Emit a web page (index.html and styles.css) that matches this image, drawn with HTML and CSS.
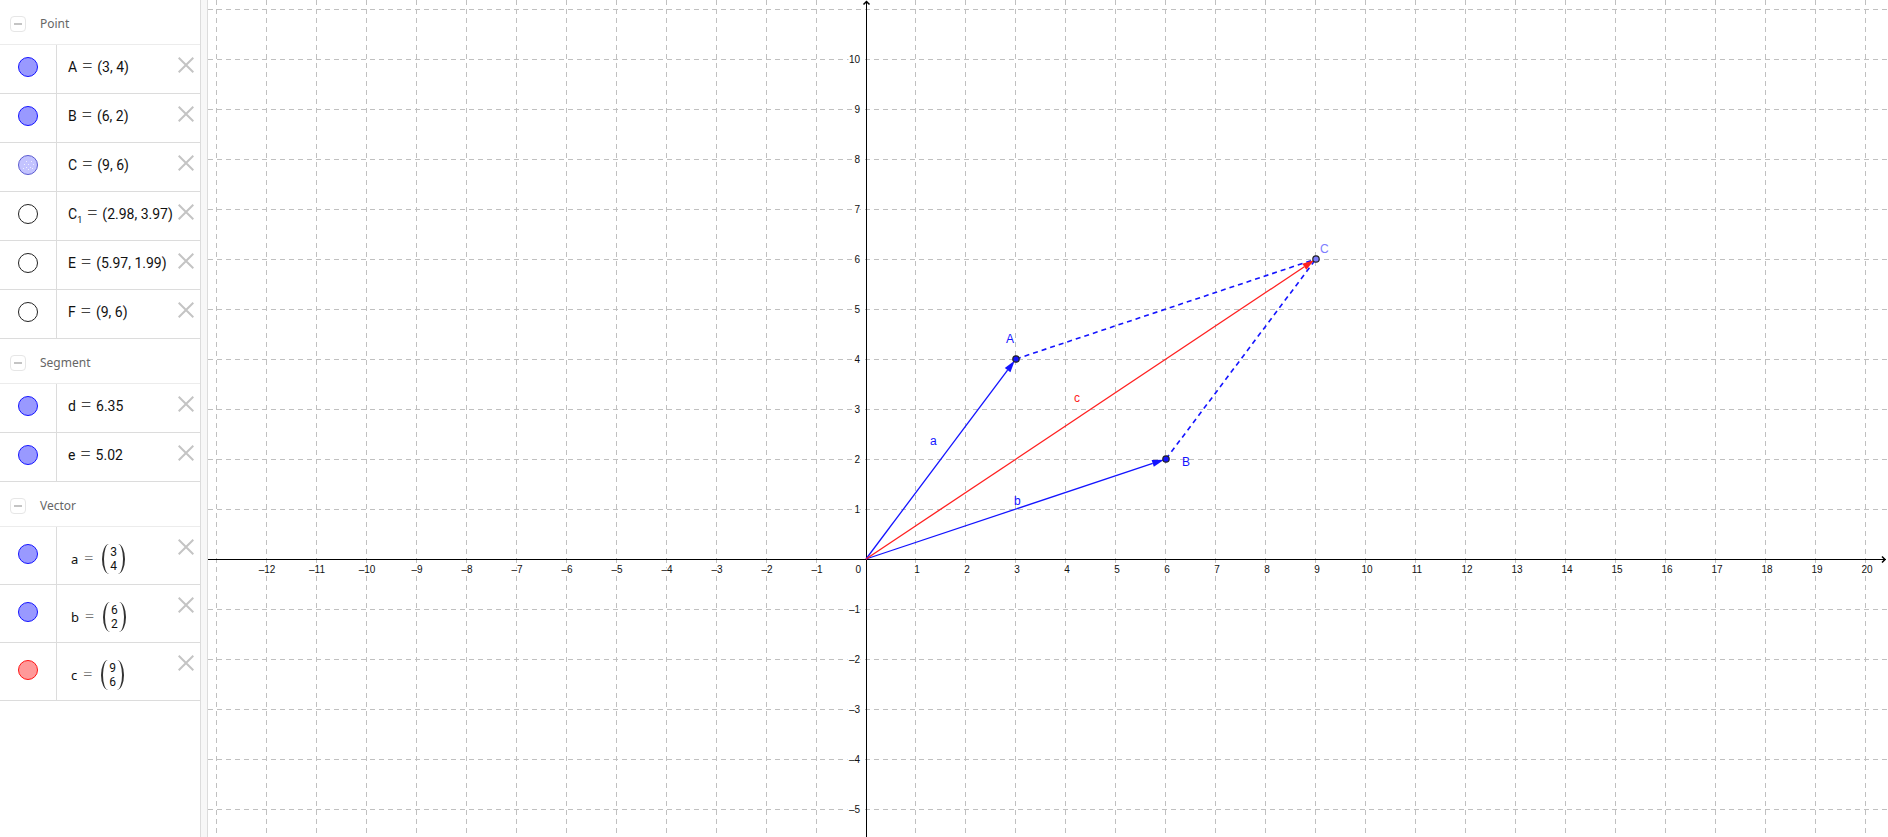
FILE: index.html
```html
<!DOCTYPE html>
<html lang="en">
<head>
<meta charset="utf-8">
<title>Vector addition</title>
<link rel="stylesheet" href="styles.css">
</head>
<body>
<main class="app">
  <aside class="algebra" id="algebra" aria-label="Algebra"></aside>
  <div class="splitter"></div>
  <section class="graphics" aria-label="Graphics">
    <svg class="plot" id="plot"></svg>
  </section>
</main>
<script src="app.js"></script>
</body>
</html>
```
FILE: styles.css
```css
* { box-sizing: border-box; }
body { margin: 0; background: #fff; font-family: "Noto Sans", "Open Sans", sans-serif; }
button { padding: 0; border: 0; background: none; font: inherit; cursor: pointer; }

.app { display: flex; height: 100vh; overflow: hidden; }
.algebra { flex: 0 0 200px; overflow: hidden; }
.splitter { flex: 0 0 8px; background: #f7f7f7; border: solid #dcdcdc; border-width: 0 1px; }
.graphics { flex: 1; min-width: 0; }
.plot { display: block; width: 100%; height: 100%; }

.group-head { display: flex; align-items: center; gap: 14px; height: 45px; padding: 4px 10px 0; border-bottom: 1px solid #ececec; }
.group-title { margin: 0; font-size: 12px; line-height: 16px; font-weight: 400; color: #666; }
.toggle { display: flex; align-items: center; justify-content: center; width: 16px; height: 16px; border: 1px solid #e6e6e6; border-radius: 4px; }
.toggle::before { content: ""; width: 8px; height: 2px; background: #c4c4c4; }

.rows { margin: 0; padding: 0; list-style: none; }
.row { display: flex; height: 49px; border-bottom: 1px solid #dcdcdc; }
.row.tall { height: 58px; }
.marble-cell { flex: 0 0 57px; padding: 12px 0 0 18px; border-right: 1px solid #dcdcdc; }
.tall .marble-cell { padding-top: 17px; }
.marble { display: block; width: 20px; height: 20px; border: 1px solid #222; border-radius: 50%; }
.marble.blue { border-color: #1414ff; background: #9999ff; }
.marble.red { border-color: #ff1414; background: #ff9999; }
.marble.pale { border-color: #5b5bd0; background: #c3c3ff; }
.marble svg { display: block; fill: #eeeeff; }
.expr { flex: 1; display: flex; align-items: baseline; gap: 5px; padding: 10px 0 0 11px; font-family: Roboto, sans-serif; font-size: 14px; line-height: 24px; color: #111; white-space: nowrap; }
.expr sub { font-size: 9px; line-height: 0; vertical-align: -4px; }
.eq { font-family: "Liberation Serif", serif; font-size: 18px; line-height: 20px; color: #444; }
.tall .expr { align-items: center; padding: 7px 0 0 14px; gap: 6px; font-family: "Noto Sans", sans-serif; font-size: 13px; }
.tall .eq { color: #777; font-size: 16px; }
.column { display: flex; flex-direction: column; position: relative; margin-left: 3px; padding: 0 8px; font-family: Roboto, sans-serif; font-size: 12px; line-height: 14px; }
.column::before, .column::after { content: ""; position: absolute; top: -1px; bottom: -1px; width: 7px; }
.column::before { left: 0; border-left: 2px solid #333; border-radius: 7px 0 0 7px / 15px 0 0 15px; }
.column::after { right: 0; border-right: 2px solid #333; border-radius: 0 7px 7px 0 / 0 15px 15px 0; }
.remove { flex: 0 0 16px; height: 16px; margin: 12px 6px 0 0; }
.remove svg { display: block; }
.remove path { stroke: #c4c4c4; stroke-width: 2; fill: none; }

.grid line { stroke: #c0c0c0; stroke-dasharray: 5 4; }
.axis { stroke: #000; stroke-width: 1; fill: none; shape-rendering: crispEdges; }
.axis-arrow { stroke: #000; stroke-width: 1.5; fill: none; }
.tick { font: 10px "Liberation Sans", sans-serif; fill: #111; stroke: #fff; stroke-width: 3px; paint-order: stroke; }
.ink-blue { fill: #1414ff; stroke: #1414ff; }
.ink-red { fill: #ff2020; stroke: #ff2020; }
.ink-pale { fill: #7d7dff; }
.label { font: 12px "Liberation Sans", sans-serif; stroke: none; }
.vector { stroke-width: 1.3; }
.segment { stroke: #1414ff; stroke-width: 1.6; stroke-dasharray: 5 4; }
.point { fill: #1414ff; stroke: #222; stroke-width: 1.2; }
.point.dependent { fill: #7d7dff; }
```
FILE: app.js
```js
const groups = [
  { title: "Point", items: [
    ["A", "(3, 4)", "blue"], ["B", "(6, 2)", "blue"], ["C", "(9, 6)", "pale"],
    ["C<sub>1</sub>", "(2.98, 3.97)", ""], ["E", "(5.97, 1.99)", ""], ["F", "(9, 6)", ""]
  ] },
  { title: "Segment", items: [["d", "6.35", "blue"], ["e", "5.02", "blue"]] },
  { title: "Vector", items: [["a", [3, 4], "blue"], ["b", [6, 2], "blue"], ["c", [9, 6], "red"]] }
];

const dots = `<svg width="18" height="18">${
  [[7, 5], [12, 5], [5, 8], [9, 8], [14, 8], [7, 11], [11, 11], [4, 12], [9, 13], [13, 12]]
    .map(([x, y]) => `<rect x="${x}" y="${y}" width="1" height="1"/>`).join("")}</svg>`;

const row = ([name, value, color]) => {
  const isVector = Array.isArray(value);
  const shown = isVector
    ? `<span class="column">${value.map(v => `<span>${v}</span>`).join("")}</span>`
    : `<span>${value}</span>`;
  return `<li class="row ${isVector ? "tall" : ""}">
    <div class="marble-cell"><button class="marble ${color}" aria-label="Show or hide">${color === "pale" ? dots : ""}</button></div>
    <div class="expr"><span>${name}</span><span class="eq">=</span>${shown}</div>
    <button class="remove" aria-label="Delete"><svg width="16" height="16"><path d="M.7 .7L15.3 15.3M15.3 .7L.7 15.3"/></svg></button>
  </li>`;
};

document.getElementById("algebra").innerHTML = groups.map(g => `
  <section>
    <header class="group-head"><button class="toggle" aria-label="Collapse ${g.title}"></button><h2 class="group-title">${g.title}</h2></header>
    <ul class="rows">${g.items.map(row).join("")}</ul>
  </section>`).join("");

const plot = document.getElementById("plot");
const unit = 50;
const origin = { x: 658, y: 559 };
const px = x => origin.x + x * unit;
const py = y => origin.y - y * unit;
const line = (x1, y1, x2, y2, cls = "") => `<line class="${cls}" x1="${x1}" y1="${y1}" x2="${x2}" y2="${y2}"/>`;
const text = (x, y, s, cls, anchor = "start") => `<text class="${cls}" x="${x}" y="${y}" text-anchor="${anchor}">${s}</text>`;
const minus = n => String(n).replace("-", "–");

function vector(x, y, cls) {
  const tx = px(x), ty = py(y);
  const len = Math.hypot(tx - origin.x, ty - origin.y);
  const ux = (tx - origin.x) / len, uy = (ty - origin.y) / len;
  const ex = tx - ux * 2, ey = ty - uy * 2;
  const bx = ex - ux * 12, by = ey - uy * 12;
  return `<g class="vector ${cls}">${line(origin.x, origin.y, bx, by)}
    <path stroke="none" d="M${ex} ${ey}L${bx - uy * 3.5} ${by + ux * 3.5}L${bx + uy * 3.5} ${by - ux * 3.5}Z"/></g>`;
}

function draw() {
  const { width: w, height: h } = plot.getBoundingClientRect();
  let grid = "", ticks = text(653, 573, "0", "tick", "end");
  for (let n = Math.ceil(-origin.x / unit); px(n) < w; n++) {
    if (!n) continue;
    const gx = px(n) + (n > 0 ? -0.5 : 0.5);
    grid += line(gx, 0, gx, h);
    if (px(n) > 20) ticks += text(px(n) + 1, 573, minus(n), "tick", "middle");
  }
  for (let n = Math.ceil((origin.y - h) / unit); py(n) > 0; n++) {
    if (!n) continue;
    grid += line(0, py(n) + 0.5, w, py(n) + 0.5);
    if (py(n) > 20) ticks += text(652, py(n) + 4, minus(n), "tick", "end");
  }
  plot.innerHTML = `<g class="grid">${grid}</g>${ticks}
    ${line(0, 559.5, w - 2, 559.5, "axis")}${line(658.5, 1, 658.5, h, "axis")}
    <path class="axis-arrow" d="M${w - 6} 556.5L${w - 3} 559.5L${w - 6} 562.5M655.5 4.5L658.5 1.5L661.5 4.5"/>
    ${line(px(3), py(4), px(9), py(6), "segment")}${line(px(6), py(2), px(9), py(6), "segment")}
    ${vector(3, 4, "ink-blue")}${vector(6, 2, "ink-blue")}${vector(9, 6, "ink-red")}
    <circle class="point" cx="${px(3)}" cy="${py(4)}" r="3.2"/>
    <circle class="point" cx="${px(6)}" cy="${py(2)}" r="3.2"/>
    <circle class="point dependent" cx="${px(9)}" cy="${py(6)}" r="3.2"/>
    ${text(798, 343, "A", "label ink-blue")}${text(974, 466, "B", "label ink-blue")}${text(1112, 253, "C", "label ink-pale")}
    ${text(722, 445, "a", "label ink-blue")}${text(806, 505, "b", "label ink-blue")}${text(866, 402, "c", "label ink-red")}`;
}
draw();
window.addEventListener("resize", draw);
```
